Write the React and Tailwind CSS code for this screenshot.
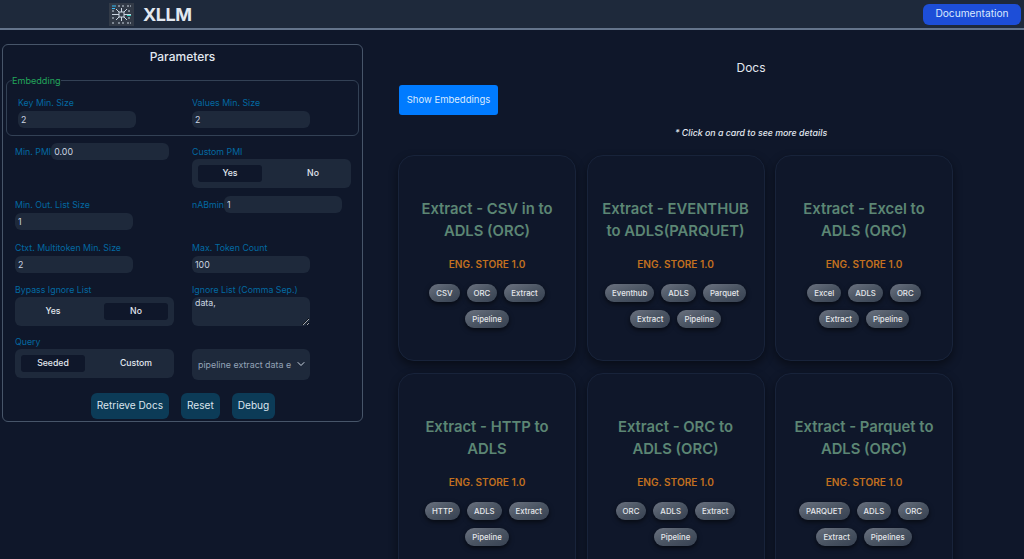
import React from "react";
import { ChevronDown } from "lucide-react";

const cards = [
  { title: "Extract - CSV in to ADLS (ORC)", tags: ["CSV", "ORC", "Extract", "Pipeline"] },
  { title: "Extract - EVENTHUB to ADLS(PARQUET)", tags: ["Eventhub", "ADLS", "Parquet", "Extract", "Pipeline"] },
  { title: "Extract - Excel to ADLS (ORC)", tags: ["Excel", "ADLS", "ORC", "Extract", "Pipeline"] },
  { title: "Extract - HTTP to ADLS", tags: ["HTTP", "ADLS", "Extract", "Pipeline"] },
  { title: "Extract - ORC to ADLS (ORC)", tags: ["ORC", "ADLS", "Extract", "Pipeline"] },
  { title: "Extract - Parquet to ADLS (ORC)", tags: ["PARQUET", "ADLS", "ORC", "Extract", "Pipelines"] },
];

function Logo() {
  return (
    <svg width="25" height="23" viewBox="0 0 25 23" className="bg-[#323a47]" fill="none">
      <g stroke="#cbd5e1" strokeWidth="1">
        <rect x="10" y="9" width="5" height="5" />
        <path d="M10 9 7 6M15 9l3-3M10 14l-3 3M15 14l3 3M3 11.500h7M15 11.500h7M12.500 5v4M12.500 14v4" />
        <path d="M9 3h2M13 3h3M18 3h4M3 20h3M9 20h2M13 20h3M18 20h4M3 8h3M19 8h3M3 15h3M19 15h3" strokeDasharray="2 1" />
      </g>
      <path d="M3 3h4M3 5.500h3" stroke="#38bdf8" strokeWidth="1.200" />
      <path d="M18 12.500h4" stroke="#2dd4bf" strokeWidth="1" />
    </svg>
  );
}

function Label({ children }) {
  return <label className="block text-[8.8px] leading-[13px] text-[#0369a1]">{children}</label>;
}

function Field({ value, className = "" }) {
  return (
    <input
      readOnly
      value={value}
      className={`block h-[17px] w-[118px] rounded-md bg-[#1e293b] px-[3px] text-[8.8px] text-[#cbd5e1] outline-none ${className}`}
    />
  );
}

function Toggle({ left, right, active }) {
  const on = "bg-[#0f172a] rounded-[3px]";
  return (
    <div className="grid h-[29px] w-[159px] grid-cols-2 gap-[19px] rounded-md bg-[#1e293b] p-[6px] text-center text-[8.7px] leading-[17px] font-medium text-[#e2e8f0]">
      <div className={active === left ? on : ""}>{left}</div>
      <div className={active === right ? on : ""}>{right}</div>
    </div>
  );
}

function ActionButton({ children }) {
  return (
    <button type="button" className="h-[26px] rounded-md bg-[#0c3b57] px-[6px] text-[10.1px] text-[#dbe4ee]">
      {children}
    </button>
  );
}

function Parameters() {
  return (
    <div className="h-[378px] w-[361px] shrink-0 rounded-md border border-[#475569] px-[3px]">
      <h2 className="mt-[4px] text-center text-[12px] leading-[16px] font-medium text-[#e2e8f0]">Parameters</h2>

      <fieldset className="mt-[10px] h-[61px] rounded-md border border-[#334155] pr-0 pl-[11px]">
        <legend className="ml-[-6px] text-[9.1px] leading-[11px] text-[#22a55a]">Embedding</legend>
        <div className="mt-[10px] flex">
          <div className="w-[174px]">
            <Label>Key Min. Size</Label>
            <Field value="2" className="mt-[2px]" />
          </div>
          <div>
            <Label>Values Min. Size</Label>
            <Field value="2" className="mt-[2px]" />
          </div>
        </div>
      </fieldset>

      <div className="mt-[7px] grid grid-cols-[177px_1fr] pl-[9px]">
        <div className="flex h-[53px] items-start">
          <span className="mt-[2px] text-[8.8px] leading-[13px] text-[#0369a1]">Min. PMI</span>
          <Field value="0.00" />
        </div>
        <div className="pt-[2px]">
          <Label>Custom PMI</Label>
          <div className="mt-[1px]"><Toggle left="Yes" right="No" active="Yes" /></div>
        </div>

        <div className="h-[45px] pt-[2px]">
          <Label>Min. Out. List Size</Label>
          <Field value="1" className="mt-[2px]" />
        </div>
        <div className="flex items-start">
          <span className="mt-[2px] text-[8.8px] leading-[13px] text-[#0369a1]">nABmin</span>
          <Field value="1" />
        </div>

        <div className="h-[42px]">
          <Label>Ctxt. Multitoken Min. Size</Label>
          <Field value="2" className="mt-[2px]" />
        </div>
        <div>
          <Label>Max. Token Count</Label>
          <Field value="100" className="mt-[2px]" />
        </div>

        <div className="h-[52px]">
          <Label>Bypass Ignore List</Label>
          <div className="mt-[1px]"><Toggle left="Yes" right="No" active="No" /></div>
        </div>
        <div>
          <Label>Ignore List (Comma Sep.)</Label>
          <textarea
            readOnly
            value="data,"
            className="mt-[1px] block h-[29px] w-[118px] rounded-md bg-[#1e293b] px-[3px] text-[8.8px] leading-[12px] text-[#cbd5e1] outline-none"
          />
        </div>

        <div>
          <Label>Query</Label>
          <div className="mt-[1px]"><Toggle left="Seeded" right="Custom" active="Seeded" /></div>
        </div>
        <div className="relative mt-[14px] h-[31px] w-[118px]">
          <select className="h-full w-full appearance-none rounded-md bg-[#1e293b] pr-[18px] pl-[6px] text-[8.9px] text-[#94a3b8] outline-none">
            <option>pipeline extract data e</option>
          </select>
          <ChevronDown size={12} strokeWidth={2} className="absolute top-[9px] right-[3px] text-[#cbd5e1]" />
        </div>
      </div>

      <div className="mt-[13px] flex justify-center gap-3 pl-[1px]">
        <ActionButton>Retrieve Docs</ActionButton>
        <ActionButton>Reset</ActionButton>
        <ActionButton>Debug</ActionButton>
      </div>
    </div>
  );
}

function Card({ title, tags }) {
  return (
    <div className="h-[206px] rounded-2xl border border-[#18233a] bg-[#0f172a] px-[12px] pt-[42px] shadow-[0_4px_10px_rgba(0,0,0,0.45)]">
      <h3 className="text-center text-[14.8px] leading-[22px] font-semibold text-[#5c8674]">{title}</h3>
      <p className="mt-[15px] text-center text-[10.1px] leading-[14px] font-semibold text-[#c2701f]">ENG. STORE 1.0</p>
      <div className="mt-[13px] flex flex-wrap justify-center gap-x-[7px] gap-y-[8px]">
        {tags.map((t) => (
          <span
            key={t}
            className="h-[18px] rounded-full bg-gradient-to-br from-[#6b7280] via-[#4b5563] to-[#374151] px-[7px] text-[7.8px] leading-[18px] font-medium text-[#e5e7eb] shadow-[0_2px_5px_rgba(0,0,0,0.6)]"
          >
            {t}
          </span>
        ))}
      </div>
    </div>
  );
}

export default function App() {
  return (
    <div className="h-screen overflow-hidden bg-[#0f172a] font-['Inter',sans-serif]">
      <header className="flex h-[30px] items-center border-b-2 border-[#64748b] bg-[#1e293b] pr-[3px] pl-[109px]">
        <Logo />
        <span className="ml-[9px] text-[18px] font-bold tracking-tight text-[#e2e8f0]">XLLM</span>
        <button type="button" className="ml-auto h-[21px] w-[98px] rounded-md bg-[#1d4ed8] text-[10.2px] text-[#dbeafe]">
          Documentation
        </button>
      </header>

      <main className="flex pt-[14px] pl-[2px]">
        <Parameters />
        <section className="ml-[35px] w-[706px] shrink-0">
          <h2 className="mt-[16px] text-center text-[12px] leading-[16px] text-[#e2e8f0]">Docs</h2>
          <button type="button" className="mt-[9px] ml-[1px] block h-[30px] w-[99px] rounded-[3px] bg-[#007bff] text-[9.5px] text-[#dbeafe]">
            Show Embeddings
          </button>
          <p className="mt-[12px] text-center text-[8.8px] leading-[12px] font-medium text-[#e2e8f0] italic">
            * Click on a card to see more details
          </p>
          <div className="mt-[16px] grid grid-cols-[178px_178px_178px] gap-x-[10.5px] gap-y-[12px]">
            {cards.map((c) => (
              <Card key={c.title} {...c} />
            ))}
          </div>
        </section>
      </main>
    </div>
  );
}
